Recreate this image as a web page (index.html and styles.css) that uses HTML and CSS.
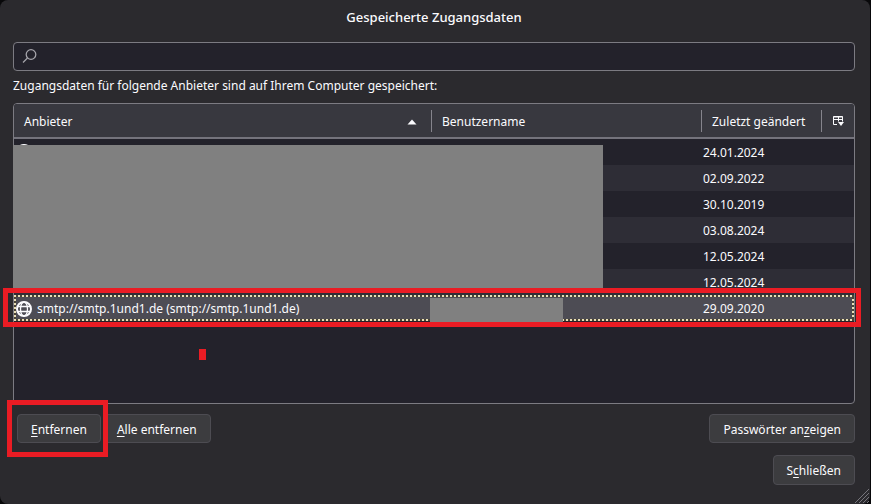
FILE: index.html
```
<!DOCTYPE html>
<html lang="de">
<head>
	<meta charset="UTF-8">
	<meta name="viewport" content="width=device-width, initial-scale=1.0">
	<title>Gespeicherte Zugangsdaten</title>
	<link rel="stylesheet" href="styles.css">
</head>
<body>
	<svg class="defs" aria-hidden="true">
		<symbol id="globe" viewBox="0 0 16 16">
			<g fill="none" stroke="currentColor">
				<circle cx="8" cy="8" r="7" stroke-width="2"/>
				<ellipse cx="8" cy="8" rx="3.5" ry="7" stroke-width="1.3"/>
				<path d="M2 5.5h12M2 10.5h12" stroke-width="1.4"/>
			</g>
		</symbol>
	</svg>

	<main class="dialog">
		<h1>Gespeicherte Zugangsdaten</h1>

		<label class="search">
			<svg class="search-icon" width="16" height="16" viewBox="0 0 16 16" fill="none" stroke="currentColor" stroke-width="1.3" aria-hidden="true">
				<circle cx="9" cy="5.5" r="4.8"/>
				<path d="M5.5 9L1 13.5"/>
			</svg>
			<input type="search" aria-label="Suchen">
		</label>

		<p class="intro" id="intro">Zugangsdaten für folgende Anbieter sind auf Ihrem Computer gespeichert:</p>

		<div class="tree">
			<table aria-labelledby="intro">
				<colgroup>
					<col class="col-site">
					<col class="col-user">
					<col class="col-date">
					<col class="col-picker">
				</colgroup>
				<thead>
					<tr>
						<th><button class="head">Anbieter
							<svg class="sort" width="10" height="6" viewBox="0 0 10 6" aria-hidden="true"><path d="M5 0.5L9.5 5.5h-9z" fill="currentColor"/></svg>
						</button></th>
						<th><button class="head">Benutzername</button></th>
						<th><button class="head">Zuletzt geändert</button></th>
						<th><button class="head picker" aria-label="Spalten auswählen">
							<svg width="12" height="12" viewBox="0 0 12 12" aria-hidden="true">
								<path d="M5 9.5H1.5v-8h9v5M1.5 4.5h9M6.5 1.5v5M1.5 2h9" fill="none" stroke="currentColor"/>
								<path d="M6 7h6l-3 4z" fill="currentColor"/>
							</svg>
						</button></th>
					</tr>
				</thead>
				<tbody>
					<tr><td><svg class="globe"><use href="#globe"/></svg></td><td></td><td>24.01.2024</td><td></td></tr>
					<tr><td></td><td></td><td>02.09.2022</td><td></td></tr>
					<tr><td></td><td></td><td>30.10.2019</td><td></td></tr>
					<tr><td></td><td></td><td>03.08.2024</td><td></td></tr>
					<tr><td></td><td></td><td>12.05.2024</td><td></td></tr>
					<tr><td></td><td></td><td>12.05.2024</td><td></td></tr>
					<tr class="selected">
						<td><span class="site"><svg class="globe"><use href="#globe"/></svg>smtp://smtp.1und1.de (smtp://smtp.1und1.de)</span></td>
						<td></td>
						<td>29.09.2020</td>
						<td></td>
					</tr>
				</tbody>
			</table>

			<!-- Schwärzungen und Markierungen -->
			<div class="redaction redaction-rows"></div>
			<div class="mark mark-row"></div>
			<div class="redaction redaction-user"></div>
			<div class="dot"></div>
		</div>

		<div class="actions">
			<span class="marked">
				<button class="btn"><u>E</u>ntfernen</button>
				<span class="mark mark-button"></span>
			</span>
			<button class="btn"><u>A</u>lle entfernen</button>
			<button class="btn push">Passwörter an<u>z</u>eigen</button>
		</div>

		<div class="actions footer">
			<button class="btn push">S<u>c</u>hließen</button>
		</div>

		<svg class="resizer" width="16" height="16" viewBox="0 0 16 16" aria-hidden="true">
			<path d="M1 15L15 1M5 15L15 5M9 15l6-6M13 15l2-2" stroke="currentColor" fill="none"/>
		</svg>
	</main>
</body>
</html>
```
FILE: styles.css
```
* { box-sizing: border-box; }
body { margin: 0; padding-right: 1px; background-color: #08080a; color: #fbfbfe; font: 12px/18px "Noto Sans", "Open Sans", sans-serif; }
button, input { font: inherit; color: inherit; }
.defs { position: absolute; width: 0; height: 0; }
.dialog {
	position: relative;
	display: flex;
	flex-direction: column;
	min-height: 100vh;
	padding: 8px 15px 19px 13px;
	border-radius: 8px;
	background-color: #2b2a2e;
}
h1 { margin: 0 0 16px; font-size: 13px; line-height: 18px; font-weight: 500; text-align: center; }

.search {
	display: flex;
	align-items: center;
	height: 29px;
	padding: 0 8px;
	border: 1px solid #7c7b82;
	border-radius: 4px;
	background-color: #23222b;
}
.search-icon { flex-shrink: 0; color: #a5a4aa; }
.search input { flex-grow: 1; min-width: 0; padding: 0 6px; border: none; outline: none; background: none; }
.intro { margin: 6px 0 8px; }

.tree { position: relative; flex-grow: 1; border: 1px solid #7c7b82; border-radius: 4px; background-color: #23222b; }
table { width: 100%; table-layout: fixed; border-collapse: separate; border-spacing: 0; }
.col-user { width: 270px; }
.col-date { width: 120px; }
.col-picker { width: 32px; }
th { height: 35px; padding: 0; border-bottom: 2px solid #74737c; background-color: #38383f; font-weight: 400; }
th:first-child { border-top-left-radius: 3px; }
th:last-child { border-top-right-radius: 3px; }
.head {
	display: flex;
	align-items: center;
	justify-content: space-between;
	width: 100%;
	height: 22px;
	padding: 2px 14px 0 10px;
	border: none;
	border-right: 1px solid #85848c;
	background: none;
	white-space: nowrap;
}
.picker { justify-content: center; padding: 0; border-right: none; }
td { height: 26px; padding: 1px 1px 0; white-space: nowrap; }
td:first-child { padding-top: 0; }
tbody tr:nth-child(even) { background-color: #2e2d36; }
.site { display: flex; align-items: center; gap: 5px; padding-top: 1px; }
.globe { display: block; flex-shrink: 0; width: 16px; height: 16px; margin-left: 1px; }
/* gepunkteter Fokusrahmen */
tbody .selected {
	background:
		repeating-linear-gradient(90deg, #e9dfb8 0 2px, #4a4435 2px 4px) top / 100% 2px no-repeat,
		repeating-linear-gradient(90deg, #e9dfb8 0 2px, #4a4435 2px 4px) bottom / 100% 2px no-repeat,
		repeating-linear-gradient(#e9dfb8 0 2px, #4a4435 2px 4px) left / 2px 100% no-repeat,
		repeating-linear-gradient(#e9dfb8 0 2px, #4a4435 2px 4px) right / 2px 100% no-repeat,
		#4d4c54;
}

.redaction { position: absolute; background-color: #808080; }
.redaction-rows { top: 41px; left: -1px; width: 590px; height: 144px; }
.redaction-user { top: 194px; left: 416px; width: 133px; height: 24px; }
.mark { position: absolute; border: 5px solid #ea1c24; pointer-events: none; }
.mark-row { top: 184px; left: -11px; right: -7px; height: 39px; }
.mark-button { top: -14px; right: -7px; bottom: -14px; left: -10px; }
.dot { position: absolute; top: 245px; left: 185px; width: 7px; height: 11px; background-color: #ea1c24; }

.actions { display: flex; gap: 2px; margin-top: 10px; padding-left: 4px; }
.footer { margin-top: 12px; }
.marked { position: relative; z-index: 1; display: flex; }
.btn {
	height: 29px;
	padding: 2px 13px 0;
	border: 1px solid #4d4c52;
	border-radius: 4px;
	background-color: #3c3c3f;
}
.footer .btn { height: 30px; }
.btn u { text-underline-offset: 2px; }
.push { margin-left: auto; }
.resizer { position: absolute; right: 0; bottom: 0; color: #77767c; }
```
